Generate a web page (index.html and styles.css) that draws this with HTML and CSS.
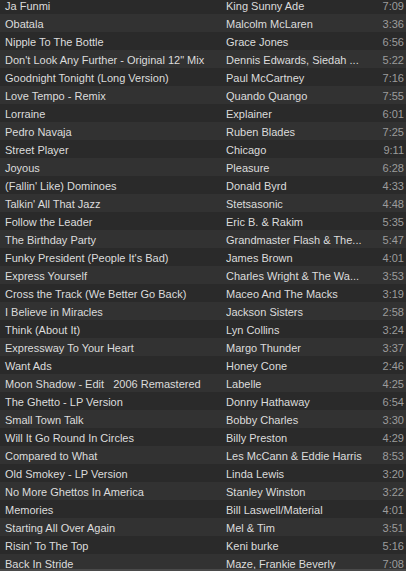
FILE: index.html
```html
<!DOCTYPE html>
<html>
<head>
<meta charset="utf-8">
<link rel="stylesheet" href="styles.css">
</head>
<body>
<div class="view">
  <div class="list">
    <div class="row"><span class="title">Ja Funmi</span><span class="artist">King Sunny Ade</span><span class="time">7:09</span></div>
    <div class="row"><span class="title">Obatala</span><span class="artist">Malcolm McLaren</span><span class="time">3:36</span></div>
    <div class="row"><span class="title">Nipple To The Bottle</span><span class="artist">Grace Jones</span><span class="time">6:56</span></div>
    <div class="row"><span class="title">Don't Look Any Further - Original 12" Mix</span><span class="artist">Dennis Edwards, Siedah ...</span><span class="time">5:22</span></div>
    <div class="row"><span class="title">Goodnight Tonight (Long Version)</span><span class="artist">Paul McCartney</span><span class="time">7:16</span></div>
    <div class="row"><span class="title">Love Tempo - Remix</span><span class="artist">Quando Quango</span><span class="time">7:55</span></div>
    <div class="row"><span class="title">Lorraine</span><span class="artist">Explainer</span><span class="time">6:01</span></div>
    <div class="row"><span class="title">Pedro Navaja</span><span class="artist">Ruben Blades</span><span class="time">7:25</span></div>
    <div class="row"><span class="title">Street Player</span><span class="artist">Chicago</span><span class="time">9:11</span></div>
    <div class="row"><span class="title">Joyous</span><span class="artist">Pleasure</span><span class="time">6:28</span></div>
    <div class="row"><span class="title">(Fallin' Like) Dominoes</span><span class="artist">Donald Byrd</span><span class="time">4:33</span></div>
    <div class="row"><span class="title">Talkin' All That Jazz</span><span class="artist">Stetsasonic</span><span class="time">4:48</span></div>
    <div class="row"><span class="title">Follow the Leader</span><span class="artist">Eric B. &amp; Rakim</span><span class="time">5:35</span></div>
    <div class="row"><span class="title">The Birthday Party</span><span class="artist">Grandmaster Flash &amp; The...</span><span class="time">5:47</span></div>
    <div class="row"><span class="title">Funky President (People It's Bad)</span><span class="artist">James Brown</span><span class="time">4:01</span></div>
    <div class="row"><span class="title">Express Yourself</span><span class="artist">Charles Wright &amp; The Wa...</span><span class="time">3:53</span></div>
    <div class="row"><span class="title">Cross the Track (We Better Go Back)</span><span class="artist">Maceo And The Macks</span><span class="time">3:19</span></div>
    <div class="row"><span class="title">I Believe in Miracles</span><span class="artist">Jackson Sisters</span><span class="time">2:58</span></div>
    <div class="row"><span class="title">Think (About It)</span><span class="artist">Lyn Collins</span><span class="time">3:24</span></div>
    <div class="row"><span class="title">Expressway To Your Heart</span><span class="artist">Margo Thunder</span><span class="time">3:37</span></div>
    <div class="row"><span class="title">Want Ads</span><span class="artist">Honey Cone</span><span class="time">2:46</span></div>
    <div class="row"><span class="title">Moon Shadow - Edit   2006 Remastered</span><span class="artist">Labelle</span><span class="time">4:25</span></div>
    <div class="row"><span class="title">The Ghetto - LP Version</span><span class="artist">Donny Hathaway</span><span class="time">6:54</span></div>
    <div class="row"><span class="title">Small Town Talk</span><span class="artist">Bobby Charles</span><span class="time">3:30</span></div>
    <div class="row"><span class="title">Will It Go Round In Circles</span><span class="artist">Billy Preston</span><span class="time">4:29</span></div>
    <div class="row"><span class="title">Compared to What</span><span class="artist">Les McCann &amp; Eddie Harris</span><span class="time">8:53</span></div>
    <div class="row"><span class="title">Old Smokey - LP Version</span><span class="artist">Linda Lewis</span><span class="time">3:20</span></div>
    <div class="row"><span class="title">No More Ghettos In America</span><span class="artist">Stanley Winston</span><span class="time">3:22</span></div>
    <div class="row"><span class="title">Memories</span><span class="artist">Bill Laswell/Material</span><span class="time">4:01</span></div>
    <div class="row"><span class="title">Starting All Over Again</span><span class="artist">Mel &amp; Tim</span><span class="time">3:51</span></div>
    <div class="row"><span class="title">Risin' To The Top</span><span class="artist">Keni burke</span><span class="time">5:16</span></div>
    <div class="row"><span class="title">Back In Stride</span><span class="artist">Maze, Frankie Beverly</span><span class="time">7:08</span></div>
  </div>
</div>
</body>
</html>
```
FILE: styles.css
```css
html, body {
  margin: 0;
  padding: 0;
  background: #2a2a2a;
}
.view {
  height: 571px;
  overflow: hidden;
  box-sizing: border-box;
  border-bottom: 2px solid #4a4a4a;
  font-family: "Liberation Sans", Arial, sans-serif;
  font-size: 11px;
  color: #dcdcdc;
}
.list {
  margin-top: -4px;
}
.row {
  display: grid;
  grid-template-columns: 226px 140px 1fr;
  height: 18px;
  box-sizing: border-box;
  padding-top: 2px;
  line-height: 16px;
  background: #2a2a2a;
}
.row:nth-child(even) {
  background: #323232;
}
.title {
  padding-left: 5px;
  white-space: pre;
  overflow: hidden;
}
.artist {
  white-space: pre;
  overflow: hidden;
}
.time {
  text-align: right;
  padding-right: 2px;
  color: #9c9c9c;
}
```
